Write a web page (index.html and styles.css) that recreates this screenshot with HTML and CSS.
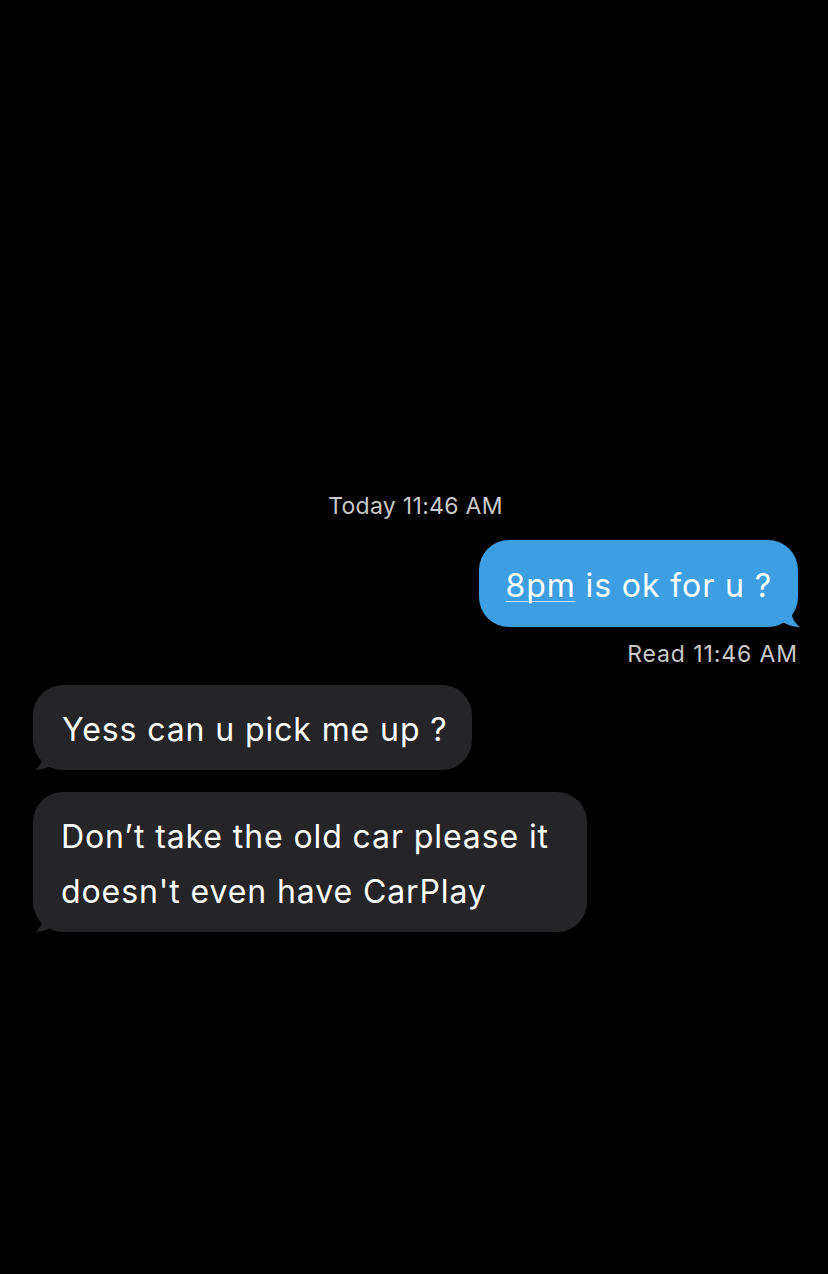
FILE: index.html
```html
<!DOCTYPE html>
<html>
<head>
<meta charset="utf-8">
<link rel="stylesheet" href="styles.css">
</head>
<body>
<div class="thread">
  <div class="stamp">Today 11:46 AM</div>
  <div class="bubble sent">
    <span class="link">8pm</span> is ok for u ?
    <svg class="tail tail-right" width="30" height="24" viewBox="0 0 30 24"><path d="M0 0 L12 0 C13 10 15 17 22 22 C14 22 7 19 2 15 Z" fill="#3d9ee2"/></svg>
  </div>
  <div class="status">Read 11:46 AM</div>
  <div class="bubble recv first">
    Yess can u pick me up ?
    <svg class="tail tail-left" width="30" height="24" viewBox="0 0 30 24"><path d="M30 0 L18 0 C17 10 15 17 8 22 C16 22 23 19 28 15 Z" fill="#252527"/></svg>
  </div>
  <div class="bubble recv second">
    Don’t take the old car please it doesn't even have CarPlay
    <svg class="tail tail-left" width="30" height="24" viewBox="0 0 30 24"><path d="M30 0 L18 0 C17 10 15 17 8 22 C16 22 23 19 28 15 Z" fill="#252527"/></svg>
  </div>
</div>
</body>
</html>
```

FILE: styles.css
```css
html, body {
  margin: 0;
  padding: 0;
  background: #000;
}
body {
  width: 828px;
  height: 1274px;
  overflow: hidden;
  font-family: Inter, "Liberation Sans", Arial, sans-serif;
}
.thread {
  display: flex;
  flex-direction: column;
  padding: 494px 30px 0 33px;
}
.stamp {
  align-self: center;
  color: #c9c9c9;
  font-size: 23px;
  line-height: 24px;
  letter-spacing: 0.3px;
}
.bubble {
  position: relative;
  font-size: 32px;
  letter-spacing: 0.9px;
  color: #fff;
  border-radius: 30px;
}
.sent {
  align-self: flex-end;
  background: #3d9ee2;
  margin-top: 22px;
  padding: 25px 26px 21px 26px;
  line-height: 41px;
}
.link {
  text-decoration: underline;
  text-decoration-color: rgba(255,255,255,0.7);
  text-underline-offset: 4px;
  text-decoration-thickness: 1px;
}
.status {
  align-self: flex-end;
  margin-top: 15px;
  color: #c9c9c9;
  font-size: 23px;
  line-height: 24px;
  letter-spacing: 0.9px;
}
.recv {
  align-self: flex-start;
  background: #252527;
}
.first {
  margin-top: 19px;
  padding: 24px 24px 20px 29px;
  line-height: 41px;
}
.second {
  margin-top: 22px;
  max-width: 554px;
  box-sizing: border-box;
  padding: 17px 30px 13px 28px;
  line-height: 55px;
}
.tail {
  position: absolute;
  bottom: -2px;
}
.tail-right {
  right: -10px;
}
.tail-left {
  left: -6px;
}
```
